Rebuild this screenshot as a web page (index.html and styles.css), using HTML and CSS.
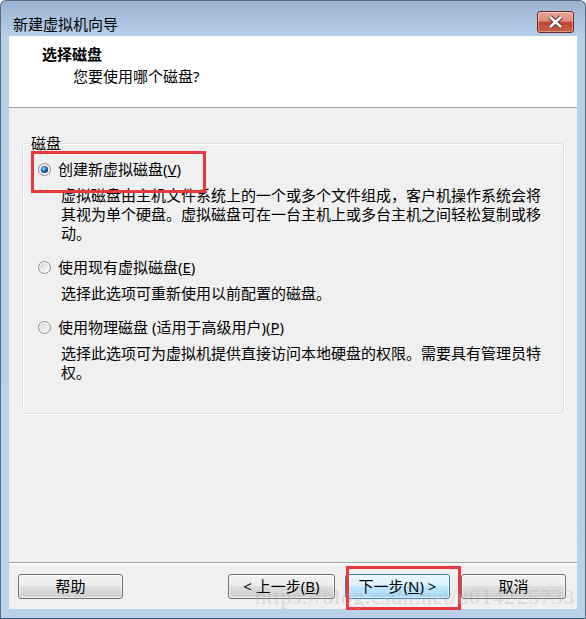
FILE: index.html
```html
<!DOCTYPE html>
<html lang="zh-CN">
<head>
<meta charset="UTF-8">
<title>新建虚拟机向导</title>
<link rel="stylesheet" href="styles.css">
</head>
<body>

<div class="window">
  <!--标题栏-->
  <div class="titlebar">
    <span class="title">新建虚拟机向导</span>
    <button class="close" aria-label="关闭">
      <svg width="35" height="20" viewBox="0 0 35 20">
        <path d="M12 5 L23 15 M23 5 L12 15" stroke="#5b3a36" stroke-width="5" fill="none"/>
        <path d="M12 5 L23 15 M23 5 L12 15" stroke="#ffffff" stroke-width="2.6" fill="none"/>
      </svg>
    </button>
  </div>

  <div class="client">
    <div class="header">
      <div class="header-title">选择磁盘</div>
      <div class="header-sub">您要使用哪个磁盘?</div>
    </div>

    <div class="content">
      <fieldset class="group">
        <legend>磁盘</legend>

        <div class="option">
          <div class="option-head marked">
            <svg class="radio" width="13" height="13" viewBox="0 0 13 13">
              <defs>
                <linearGradient id="ring" x1="0" y1="0" x2="1" y2="1">
                  <stop offset="0" stop-color="#d2d2d2"/>
                  <stop offset="1" stop-color="#fbfbfb"/>
                </linearGradient>
                <radialGradient id="dot" cx="0.4" cy="0.35" r="0.65">
                  <stop offset="0" stop-color="#b6e3fb"/>
                  <stop offset="0.45" stop-color="#2a7fc8"/>
                  <stop offset="1" stop-color="#0b3a6e"/>
                </radialGradient>
              </defs>
              <circle cx="6.5" cy="6.5" r="6" fill="#f6f6f6" stroke="#8a8a8a"/>
              <circle cx="6.5" cy="6.5" r="4.2" fill="url(#ring)"/>
              <circle cx="6.5" cy="6.5" r="3.6" fill="url(#dot)"/>
            </svg>
            <span class="option-label">创建新虚拟磁盘(<u>V</u>)</span>
          </div>
          <p class="option-desc">虚拟磁盘由主机文件系统上的一个或多个文件组成，客户机操作系统会将其视为单个硬盘。虚拟磁盘可在一台主机上或多台主机之间轻松复制或移动。</p>
        </div>

        <div class="option">
          <div class="option-head">
            <svg class="radio" width="13" height="13" viewBox="0 0 13 13">
              <circle cx="6.5" cy="6.5" r="6" fill="#f6f6f6" stroke="#8a8a8a"/>
              <circle cx="6.5" cy="6.5" r="4.2" fill="url(#ring)"/>
            </svg>
            <span class="option-label">使用现有虚拟磁盘(<u>E</u>)</span>
          </div>
          <p class="option-desc">选择此选项可重新使用以前配置的磁盘。</p>
        </div>

        <div class="option">
          <div class="option-head">
            <svg class="radio" width="13" height="13" viewBox="0 0 13 13">
              <circle cx="6.5" cy="6.5" r="6" fill="#f6f6f6" stroke="#8a8a8a"/>
              <circle cx="6.5" cy="6.5" r="4.2" fill="url(#ring)"/>
            </svg>
            <span class="option-label">使用物理磁盘 (适用于高级用户)(<u>P</u>)</span>
          </div>
          <p class="option-desc">选择此选项可为虚拟机提供直接访问本地硬盘的权限。需要具有管理员特权。</p>
        </div>
      </fieldset>
    </div>

    <!--按钮-->
    <div class="footer">
      <button class="btn">帮助</button>
      <button class="btn btn-back">&lt; 上一步(<u>B</u>)</button>
      <button class="btn btn-next">下一步(<u>N</u>) &gt;</button>
      <button class="btn">取消</button>
    </div>
  </div>

  <div class="watermark">https://blog.csdn.net/u014225733</div>
</div>

</body>
</html>
```

FILE: styles.css
```css
* {
  margin: 0;
  padding: 0;
  box-sizing: border-box;
}

body {
  background: #ffffff;
  font-family: "Noto Sans", "Noto Sans CJK SC", sans-serif;
  font-size: 15px;
  color: #000;
}

.window {
  position: relative;
  width: 586px;
  height: 619px;
  display: flex;
  flex-direction: column;
  padding: 0 8px 9px;
  border: 1px solid #5b6b7e;
  border-bottom-color: #2f5d7a;
  border-radius: 6px 6px 0 0;
  background: linear-gradient(#9ab3d2 0, #b8cfe9 36px, #bad1ea 100%);
}

.titlebar {
  height: 35px;
  display: flex;
  align-items: flex-start;
  justify-content: space-between;
  padding: 0 3px 0 4px;
}

.title {
  margin-top: 13px;
  line-height: 20px;
}

.close {
  margin-top: 10px;
  width: 37px;
  height: 22px;
  border: 1px solid #6e2b24;
  border-radius: 3px;
  background: linear-gradient(#e9a497 0%, #dd8a7a 45%, #c5442f 52%, #c9604b 100%);
  box-shadow: inset 0 0 0 1px rgba(255,255,255,.35);
  display: flex;
  align-items: center;
  justify-content: center;
}

.client {
  flex: 1;
  display: flex;
  flex-direction: column;
  background: #f0f0f0;
}

.header {
  height: 72px;
  background: #fff;
  border-bottom: 1px solid #a0a0a0;
  padding: 8px 0 0 33px;
}

.header-title {
  font-weight: bold;
  line-height: 20px;
}

.header-sub {
  margin: 2px 0 0 31px;
  line-height: 20px;
}

.content {
  flex: 1;
  padding: 25px 13px 0;
}

.group {
  border: 1px solid #d5dfe5;
  border-radius: 3px;
  box-shadow: inset 1px 1px #fff, 1px 1px #fff;
  padding: 6px 7px 31px;
}

.group legend {
  padding: 0 1px;
  line-height: 20px;
}

.option {
  margin-left: 8px;
}

.option + .option {
  margin-top: 14px;
}

.option-head {
  position: relative;
  display: flex;
  align-items: center;
  height: 20px;
}

.radio {
  flex: none;
}

.option-label {
  margin-left: 7px;
  line-height: 20px;
}

.marked::after {
  content: "";
  position: absolute;
  left: -7px;
  top: -8px;
  width: 169px;
  height: 36px;
  border: 3px solid #e8383d;
}

.option-desc {
  margin: 7px 0 0 23px;
  width: 484px;
  line-height: 19px;
}

.footer {
  display: flex;
  padding: 11px 11px 10px 9px;
  border-top: 1px solid #a0a0a0;
  box-shadow: inset 0 1px #fff;
}

.btn {
  position: relative;
  width: 105px;
  height: 25px;
  font: inherit;
  line-height: 23px;
  color: #000;
  border: 1px solid #707070;
  border-radius: 3px;
  background: linear-gradient(#f2f2f2 0%, #ebebeb 49%, #dddddd 50%, #cfcfcf 100%);
  box-shadow: inset 0 0 0 1px rgba(255,255,255,.6);
}

.btn-back {
  width: 107px;
  margin-left: auto;
  margin-right: 10px;
}

.btn-next {
  margin-right: 11px;
  border-color: #3c7fb1;
  background: linear-gradient(#eaf6fd 0%, #d9f0fc 49%, #bee6fd 50%, #a7d9f5 100%);
  box-shadow: inset 0 0 0 1px rgba(255,255,255,.7);
}

.btn-next::after {
  content: "";
  position: absolute;
  left: 0;
  top: -9px;
  width: 109px;
  height: 38px;
  border: 3px solid #e8383d;
}

.watermark {
  position: absolute;
  left: 254px;
  top: 585px;
  font-family: "Liberation Serif", serif;
  font-size: 22px;
  line-height: 22px;
  letter-spacing: 0.8px;
  color: rgba(180, 180, 180, 0.42);
  pointer-events: none;
}
```
